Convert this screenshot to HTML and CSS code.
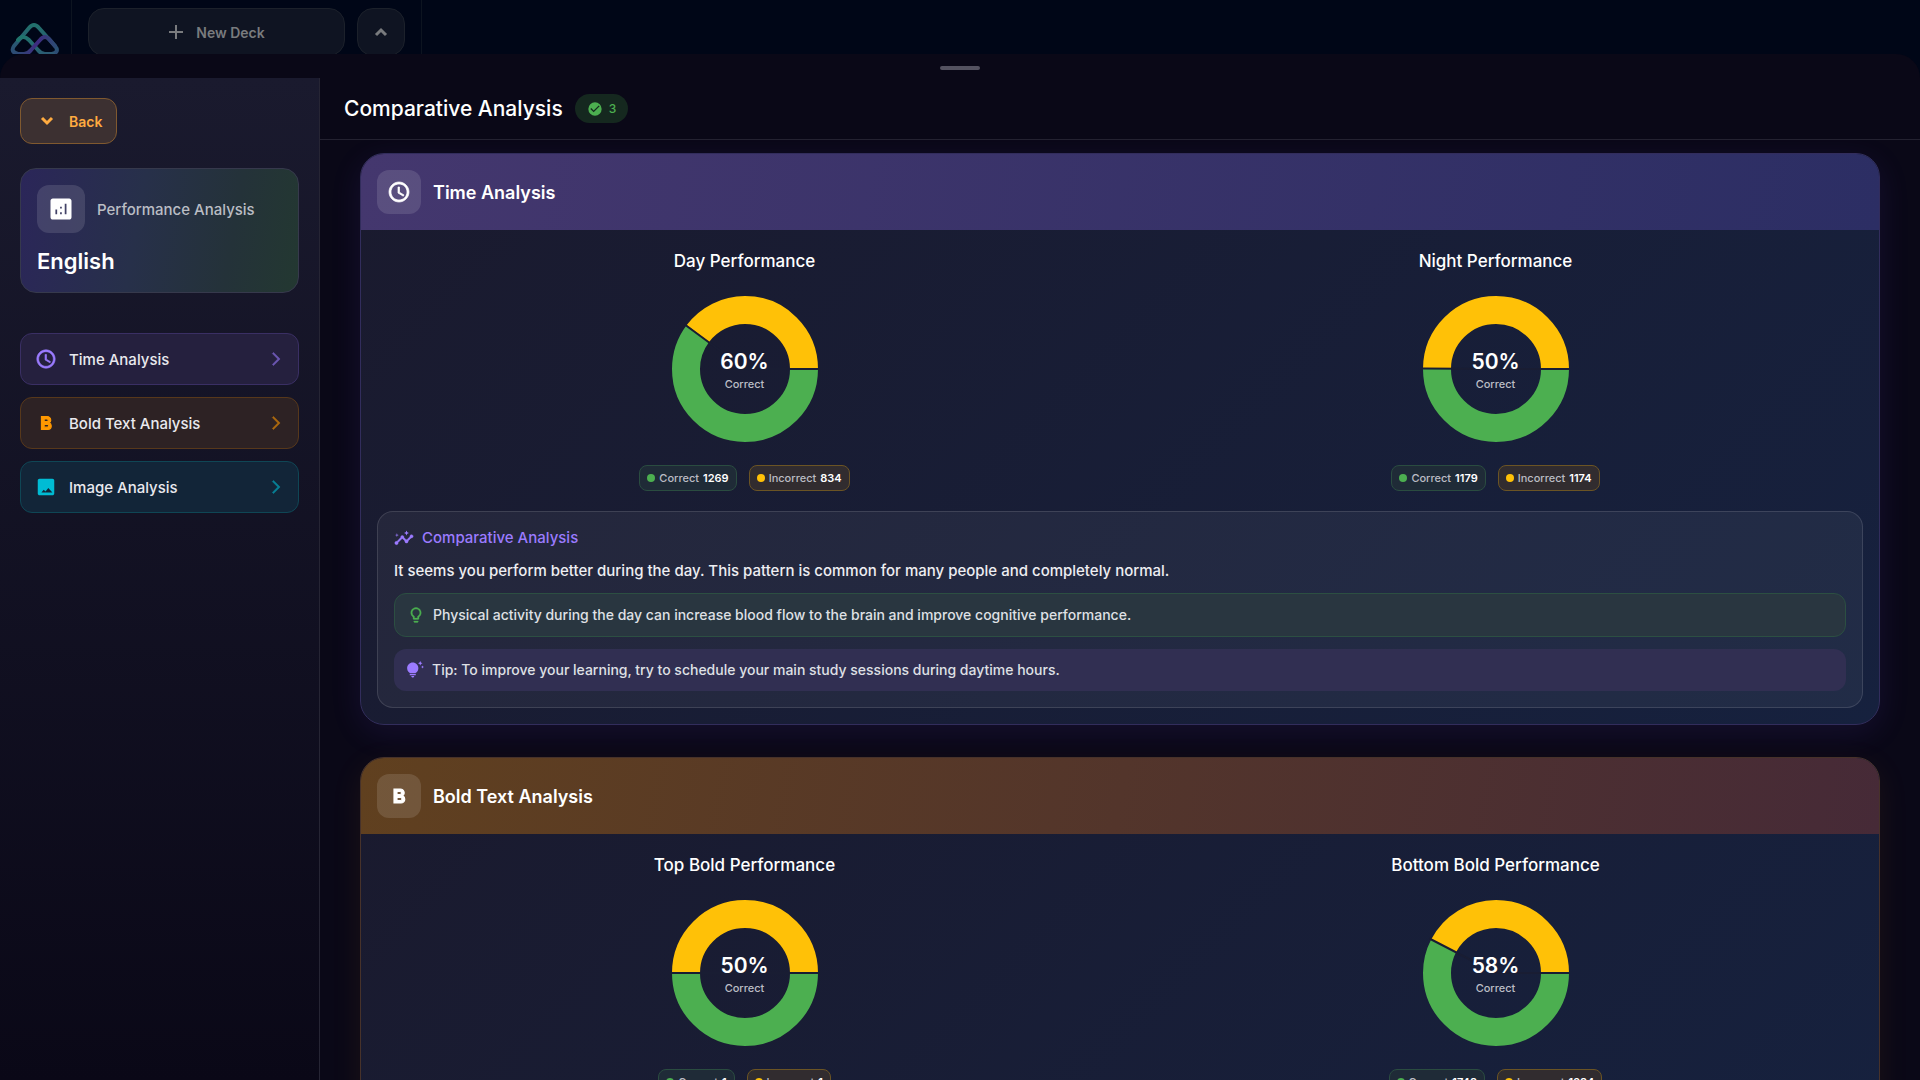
FILE: index.html
```
<!DOCTYPE html>
<html lang="en">
<head>
<meta charset="utf-8">
<title>Comparative Analysis</title>
<meta name="viewport" content="width=device-width, initial-scale=1">
<link rel="stylesheet" href="styles.css">
</head>
<body>
<svg class="sprite" aria-hidden="true">
  <symbol id="clock" viewBox="0 0 24 24"><path stroke="currentColor" stroke-width=".7" d="M11.99 2C6.47 2 2 6.48 2 12s4.47 10 9.99 10C17.52 22 22 17.52 22 12S17.52 2 11.99 2zM12 20c-4.42 0-8-3.58-8-8s3.58-8 8-8 8 3.58 8 8-3.58 8-8 8zm.5-13H11v6l5.25 3.15.75-1.23-4.5-2.67z"/></symbol>
  <symbol id="bold" viewBox="0 0 24 24"><path stroke="currentColor" stroke-width="1.200" d="M15.6 11.8c1-.7 1.6-1.8 1.6-2.8a4 4 0 0 0-4-4H7v14h7.040c2.100 0 3.710-1.700 3.710-3.790 0-1.520-.860-2.820-2.150-3.410zM10 7.500h3a1.500 1.500 0 0 1 0 3h-3zm3.500 9H10v-3h3.500a1.500 1.500 0 0 1 0 3z"/></symbol>
  <symbol id="picture" viewBox="0 0 24 24"><path d="M21 19V5c0-1.100-.9-2-2-2H5c-1.100 0-2 .9-2 2v14c0 1.100.9 2 2 2h14c1.100 0 2-.9 2-2zM7 18l2.500-3 2 2 3-4L19 18z"/></symbol>
  <symbol id="next" viewBox="0 0 24 24"><path stroke="currentColor" stroke-width=".8" d="M6.490 20.130l1.770 1.770 9.900-9.900-9.900-9.900-1.770 1.770L14.620 12z"/></symbol>
  <symbol id="analytics" viewBox="0 0 24 24"><path d="M19 3H5c-1.100 0-2 .9-2 2v14c0 1.100.9 2 2 2h14c1.100 0 2-.9 2-2V5c0-1.100-.9-2-2-2zM8.700 16.500H7.200v-4h1.500zm4 0h-1.500v-1.700h1.500zm0-5h-1.500v-1.500h1.500zm4 5h-1.500v-9h1.500z"/></symbol>
  <symbol id="check" viewBox="0 0 24 24"><path d="M12 2a10 10 0 1 0 0 20 10 10 0 0 0 0-20zm-2 15l-5-5 1.410-1.410L10 14.170l7.590-7.590L19 8z"/></symbol>
  <symbol id="insights" viewBox="0 0 24 24"><path stroke="currentColor" stroke-width=".5" d="M21 8c-1.450 0-2.260 1.440-1.930 2.510l-3.550 3.560c-.3-.09-.74-.09-1.040 0l-2.550-2.550C12.270 10.450 11.460 9 10 9c-1.450 0-2.270 1.440-1.930 2.520l-4.560 4.550C2.440 15.740 1 16.550 1 18c0 1.100.9 2 2 2 1.450 0 2.260-1.440 1.930-2.510l4.550-4.560c.3.090.74.090 1.040 0l2.550 2.550C12.730 16.550 13.540 18 15 18c1.450 0 2.270-1.440 1.930-2.520l3.560-3.550C21.560 12.260 23 11.450 23 10c0-1.100-.9-2-2-2z"/><path d="M15 9l.94-2.070L18 6l-2.060-.93L15 3l-.92 2.070L12 6l2.080.93zM3.500 11L4 9l2-.5L4 8l-.5-2L3 8l-2 .5L3 9z"/></symbol>
  <symbol id="bulb" viewBox="0 0 24 24"><path stroke="currentColor" stroke-width=".4" d="M9 21c0 .55.450 1 1 1h4c.55 0 1-.45 1-1v-1H9zm3-19C8.140 2 5 5.140 5 9c0 2.380 1.190 4.470 3 5.740V17c0 .55.450 1 1 1h6c.55 0 1-.45 1-1v-2.260c1.810-1.270 3-3.360 3-5.740 0-3.860-3.140-7-7-7zm2.850 11.100l-.85.6V16h-4v-2.300l-.85-.6A4.997 4.997 0 0 1 7 9c0-2.760 2.240-5 5-5s5 2.240 5 5c0 1.630-.8 3.160-2.150 4.100z"/></symbol>
  <symbol id="tip" viewBox="0 0 24 24"><path d="M7 20h4c0 1.100-.9 2-2 2s-2-.9-2-2zm-2-1h8v-2H5zm11.500-9.500c0 3.820-2.660 5.860-3.770 6.500H5.270C4.160 15.360 1.500 13.320 1.500 9.500 1.500 5.360 4.860 2 9 2s7.500 3.360 7.500 7.500zm4.870-2.130L20 8l1.370.63L22 10l.63-1.370L24 8l-1.370-.63L22 6zM19 6l.94-2.060L22 3l-2.060-.94L19 0l-.94 2.060L16 3l2.060.94z"/></symbol>
</svg>

<header class="topbar">
  <a class="rail" href="#" aria-label="Home">
    <svg class="logo" viewBox="0 0 50 42">
      <defs>
        <linearGradient id="lg" x1="0" y1="0" x2="0" y2="1"><stop offset="0" stop-color="#22706c"/><stop offset="1" stop-color="#2d4a74"/></linearGradient>
        <linearGradient id="lt" x1="0" y1="0" x2="1" y2="1"><stop offset="0" stop-color="#1f756c"/><stop offset="1" stop-color="#2d5874"/></linearGradient>
        <linearGradient id="lp" x1="0" y1="0" x2="1" y2="0"><stop offset="0" stop-color="#2d4a74"/><stop offset=".55" stop-color="#3f2a80"/><stop offset="1" stop-color="#2d4a74"/></linearGradient>
      </defs>
      <path stroke="url(#lg)" d="M8 32q-8-2-4-8L19 6q5-6 10 0l16 18q5 6-3 8"/>
      <path stroke="url(#lt)" d="M8 18q5-6 11 0l9 10q3 4 7 4h8"/>
      <path stroke="url(#lp)" d="M7 32h7q4 0 7-4l9-10q5-6 10 0l5 6"/>
    </svg>
  </a>
  <div class="deckbar">
    <button class="ghost new-deck" type="button">
      <svg class="i16" viewBox="0 0 16 16"><path d="M8 1v14M1 8h14" stroke="currentColor" stroke-width="2"/></svg>
      New Deck
    </button>
    <button class="ghost collapse" type="button" aria-label="Collapse">
      <svg class="i16" viewBox="0 0 16 16"><path d="M3 11l5-5 5 5" fill="none" stroke="currentColor" stroke-width="3"/></svg>
    </button>
  </div>
</header>

<section class="sheet">
  <div class="grip"><span class="grip-bar"></span></div>
  <div class="columns">
    <aside class="sidebar">
      <button class="back" type="button">
        <svg class="i20" viewBox="0 0 20 20"><path d="M5 7l5 5 5-5" fill="none" stroke="currentColor" stroke-width="3"/></svg>
        Back
      </button>
      <div class="subject">
        <div class="subject-head">
          <span class="tile tile-lg"><svg class="i28"><use href="#analytics"/></svg></span>
          <span class="subject-label">Performance Analysis</span>
        </div>
        <h1 class="subject-name">English</h1>
      </div>
      <nav class="nav">
        <a class="nav-item violet" href="#time"><svg class="i22"><use href="#clock"/></svg><span class="nav-text">Time Analysis</span><svg class="i16 arrow"><use href="#next"/></svg></a>
        <a class="nav-item orange" href="#bold-text"><svg class="i22"><use href="#bold"/></svg><span class="nav-text">Bold Text Analysis</span><svg class="i16 arrow"><use href="#next"/></svg></a>
        <a class="nav-item cyan" href="#image"><svg class="i22"><use href="#picture"/></svg><span class="nav-text">Image Analysis</span><svg class="i16 arrow"><use href="#next"/></svg></a>
      </nav>
    </aside>

    <main class="main">
      <div class="main-head">
        <h2 class="main-title">Comparative Analysis</h2>
        <span class="count"><svg class="i16"><use href="#check"/></svg>3</span>
      </div>
      <div class="cards">
        <article class="card card-violet" id="time">
          <div class="card-head">
            <span class="tile"><svg class="i24"><use href="#clock"/></svg></span>
            <h3 class="card-title">Time Analysis</h3>
          </div>
          <div class="card-body">
            <div class="charts">
              <div class="chart">
                <h4 class="chart-title">Day Performance</h4>
                <div class="donut">
                  <svg class="ring" viewBox="0 0 146 146"><circle class="arc good" pathLength="100" stroke-dasharray="60.300 100" cx="73" cy="73" r="59"/><circle class="arc bad" pathLength="100" stroke-dasharray="39.700 100" stroke-dashoffset="-60.300" cx="73" cy="73" r="59"/><path class="cut" d="M73 73h75M73 73L12.700 28.500"/></svg>
                  <div class="score"><strong class="pct">60%</strong><span class="pct-label">Correct</span></div>
                </div>
                <div class="legend">
                  <span class="chip chip-good"><i class="dot"></i>Correct <b>1269</b></span>
                  <span class="chip chip-bad"><i class="dot"></i>Incorrect <b>834</b></span>
                </div>
              </div>
              <div class="chart">
                <h4 class="chart-title">Night Performance</h4>
                <div class="donut">
                  <svg class="ring" viewBox="0 0 146 146"><circle class="arc good" pathLength="100" stroke-dasharray="50.100 100" cx="73" cy="73" r="59"/><circle class="arc bad" pathLength="100" stroke-dasharray="49.900 100" stroke-dashoffset="-50.100" cx="73" cy="73" r="59"/><path class="cut" d="M73 73h75M73 73L-2 72.500"/></svg>
                  <div class="score"><strong class="pct">50%</strong><span class="pct-label">Correct</span></div>
                </div>
                <div class="legend">
                  <span class="chip chip-good"><i class="dot"></i>Correct <b>1179</b></span>
                  <span class="chip chip-bad"><i class="dot"></i>Incorrect <b>1174</b></span>
                </div>
              </div>
            </div>
            <div class="insight">
              <h4 class="insight-title"><svg class="i20"><use href="#insights"/></svg>Comparative Analysis</h4>
              <p class="insight-text">It seems you perform better during the day. This pattern is common for many people and completely normal.</p>
              <p class="note note-good"><svg class="i18"><use href="#bulb"/></svg>Physical activity during the day can increase blood flow to the brain and improve cognitive performance.</p>
              <p class="note note-tip"><svg class="i18"><use href="#tip"/></svg>Tip: To improve your learning, try to schedule your main study sessions during daytime hours.</p>
            </div>
          </div>
        </article>

        <article class="card card-orange" id="bold-text">
          <div class="card-head">
            <span class="tile"><svg class="i24"><use href="#bold"/></svg></span>
            <h3 class="card-title">Bold Text Analysis</h3>
          </div>
          <div class="card-body">
            <div class="charts">
              <div class="chart">
                <h4 class="chart-title">Top Bold Performance</h4>
                <div class="donut">
                  <svg class="ring" viewBox="0 0 146 146"><circle class="arc good" pathLength="100" stroke-dasharray="50 100" cx="73" cy="73" r="59"/><circle class="arc bad" pathLength="100" stroke-dasharray="50 100" stroke-dashoffset="-50" cx="73" cy="73" r="59"/><path class="cut" d="M-2 73h150"/></svg>
                  <div class="score"><strong class="pct">50%</strong><span class="pct-label">Correct</span></div>
                </div>
                <div class="legend">
                  <span class="chip chip-good"><i class="dot"></i>Correct <b>1</b></span>
                  <span class="chip chip-bad"><i class="dot"></i>Incorrect <b>1</b></span>
                </div>
              </div>
              <div class="chart">
                <h4 class="chart-title">Bottom Bold Performance</h4>
                <div class="donut">
                  <svg class="ring" viewBox="0 0 146 146"><circle class="arc good" pathLength="100" stroke-dasharray="57.600 100" cx="73" cy="73" r="59"/><circle class="arc bad" pathLength="100" stroke-dasharray="42.400 100" stroke-dashoffset="-57.600" cx="73" cy="73" r="59"/><path class="cut" d="M73 73h75M73 73L6.400 38.500"/></svg>
                  <div class="score"><strong class="pct">58%</strong><span class="pct-label">Correct</span></div>
                </div>
                <div class="legend">
                  <span class="chip chip-good"><i class="dot"></i>Correct <b>1748</b></span>
                  <span class="chip chip-bad"><i class="dot"></i>Incorrect <b>1284</b></span>
                </div>
              </div>
            </div>
          </div>
        </article>
      </div>
    </main>
  </div>
</section>
</body>
</html>
```
FILE: styles.css
```
* { box-sizing: border-box; }
html, body { height: 100%; }
body {
  margin: 0;
  display: flex;
  flex-direction: column;
  overflow: hidden;
  background: #000617;
  color: #fff;
  font-family: Inter, "Noto Sans", sans-serif;
  font-weight: 500;
}
h1, h2, h3, h4, p { margin: 0; font-weight: 500; }
button { font: inherit; cursor: pointer; }
a { color: inherit; text-decoration: none; }
svg { fill: currentColor; flex: none; }
.sprite { position: absolute; width: 0; height: 0; }
.i16 { width: 16px; height: 16px; }
.i18 { width: 18px; height: 18px; }
.i20 { width: 20px; height: 20px; }
.i22 { width: 22px; height: 22px; }
.i24 { width: 24px; height: 24px; }
.i28 { width: 28px; height: 28px; }

/* page behind the sheet */
.topbar { display: flex; height: 54px; flex: none; }
.rail { width: 72px; border-right: 1px solid #0d1420; padding: 22px 10px 0; overflow: hidden; }
.logo { display: block; width: 50px; height: 42px; fill: none; stroke-width: 4px; stroke-linejoin: round; stroke-linecap: round; }
.deckbar { display: flex; gap: 12px; width: 350px; padding: 8px 16px; border-right: 1px solid #0d1420; overflow: hidden; }
.ghost {
  display: flex; align-items: center; justify-content: center; gap: 12px;
  height: 48px; flex: none; border: 1px solid #1c212b; border-radius: 16px;
  background: #0f1422; color: #797b7e; font-size: 14px; font-weight: 600;
}
.new-deck { flex: 1; }
.collapse { width: 48px; padding: 0; }

/* sheet */
.sheet { flex: 1; min-height: 0; display: flex; flex-direction: column; border-radius: 24px 24px 0 0; background: #0a0817; }
.grip { display: flex; justify-content: center; height: 24px; flex: none; padding-top: 12px; }
.grip-bar { width: 40px; height: 4px; border-radius: 2px; background: #545260; }
.columns { flex: 1; min-height: 0; display: flex; }

.sidebar {
  width: 320px; flex: none; padding: 20px;
  border-right: 1px solid #262534;
  background: linear-gradient(180deg, #1a1a2e, #0a0817);
}
.back {
  display: flex; align-items: center; gap: 12px; height: 46px; padding: 0 14px 0 16px;
  border: 1px solid #80592f; border-radius: 12px; background: #3c3031;
  color: #ffab40; font-size: 14px; font-weight: 600;
}
.subject {
  margin-top: 24px; padding: 16px; border: 1px solid #36394c; border-radius: 16px;
  background: linear-gradient(100deg, #2b2659, #27304a 42%, #243239 75%, #233831);
}
.subject-head { display: flex; align-items: center; gap: 12px; }
.subject-label { color: #babdc4; font-size: 15px; }
.subject-name { margin-top: 13px; font-size: 22px; line-height: 30px; font-weight: 600; }
.tile {
  display: flex; align-items: center; justify-content: center;
  width: 44px; height: 44px; border-radius: 12px; background: rgba(255, 255, 255, .12);
}
.tile-lg { width: 48px; height: 48px; }
.nav { display: flex; flex-direction: column; gap: 12px; margin-top: 40px; }
.nav-item {
  display: flex; align-items: center; gap: 12px; height: 52px; padding: 0 14px;
  border: 1px solid; border-radius: 12px;
}
.nav-text { flex: 1; color: #e9e9ee; font-size: 15px; }
.arrow { opacity: .6; }
.violet { color: #9b7bff; background: #25203e; border-color: #3a2f64; }
.orange { color: #ff9800; background: #2d2224; border-color: #57381b; }
.cyan { color: #00bcd4; background: #122538; border-color: #0f4655; }

.main { flex: 1; min-width: 0; display: flex; flex-direction: column; }
.main-head {
  display: flex; align-items: center; gap: 12px; height: 62px; flex: none;
  padding: 0 24px; border-bottom: 1px solid #242231;
}
.main-title { font-size: 21px; }
.count {
  display: flex; align-items: center; gap: 6px; height: 29px; padding: 0 12px;
  border-radius: 16px; background: #15281f; color: #4caf50; font-size: 12px;
}
.cards { flex: 1; min-height: 0; overflow: hidden; display: flex; flex-direction: column; gap: 32px; padding: 13px 40px; }
.card { flex: none; overflow: hidden; border: 1px solid; border-radius: 24px; background: linear-gradient(135deg, #1a1a2e, #16213e); }
.card-violet { border-color: #322d5c; box-shadow: 0 8px 32px rgba(124, 92, 255, .1); }
.card-orange { border-color: #47322a; box-shadow: 0 8px 32px rgba(255, 152, 0, .08); }
.card-head { display: flex; align-items: center; gap: 12px; padding: 16px; }
.card-violet .card-head { background: linear-gradient(100deg, #44376e, #2c2e64); }
.card-orange .card-head { background: linear-gradient(100deg, #60401f, #462a37); }
.card-title { font-size: 18px; font-weight: 600; }
.card-body { padding: 16px; }
.charts { display: grid; grid-template-columns: 1fr 1fr; gap: 16px; }
.chart { display: flex; flex-direction: column; align-items: center; }
.chart-title { margin-bottom: 20px; font-size: 17px; line-height: 30px; }
.donut { display: grid; place-items: center; }
.ring, .score { grid-area: 1 / 1; }
.ring { width: 146px; height: 146px; }
.arc { fill: none; stroke-width: 28px; }
.good { stroke: #4caf50; }
.bad { stroke: #ffc107; }
.cut { stroke: #191d33; stroke-width: 2px; }
.score { display: flex; flex-direction: column; align-items: center; padding-top: 2px; }
.pct { font-size: 21px; line-height: 28px; font-weight: 600; }
.pct-label { color: #bcbdc6; font-size: 11px; line-height: 16px; }
.legend { display: flex; gap: 12px; margin: 23px 0 20px; }
.chip {
  display: flex; align-items: center; gap: 4px; height: 26px; padding: 0 7px;
  border: 1px solid; border-radius: 8px; color: #bbbcc4; font-size: 11px;
}
.chip b { color: #fff; font-weight: 600; }
.dot { width: 8px; height: 8px; border-radius: 50%; }
.chip-good { background: #1f2b37; border-color: #2a4c40; }
.chip-good .dot { background: #4caf50; }
.chip-bad { background: #312c2f; border-color: #6b5424; }
.chip-bad .dot { background: #ffc107; }
.insight { padding: 16px; border: 1px solid rgba(255, 255, 255, .12); border-radius: 16px; background: rgba(255, 255, 255, .05); }
.insight-title { display: flex; align-items: center; gap: 8px; color: #9b7bff; font-size: 15px; line-height: 20px; }
.insight-text { margin: 12px 0; color: #eeeef2; font-size: 15px; line-height: 21px; }
.note { display: flex; align-items: center; gap: 8px; border-radius: 12px; color: #dfe0e5; font-size: 14px; line-height: 18px; }
.note-good { padding: 12px; border: 1px solid #2c4f42; background: #293640; }
.note-good svg { color: #4caf50; }
.note-tip { margin-top: 12px; padding: 12px; background: #312f52; }
.note-tip svg { color: #9b7bff; }
```
